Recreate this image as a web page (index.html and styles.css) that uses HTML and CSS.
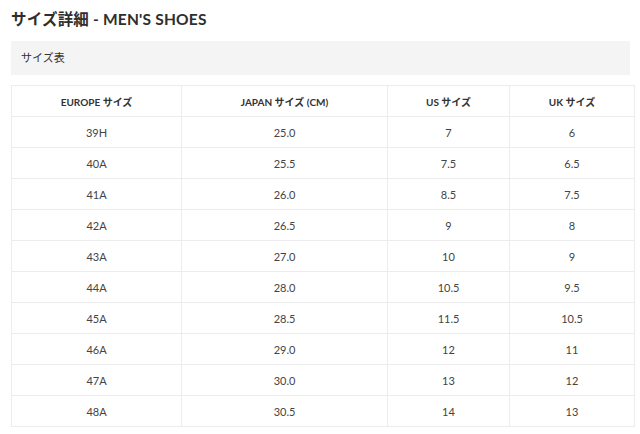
FILE: index.html
```html
<!DOCTYPE html>
<html lang="ja">
<head>
<meta charset="utf-8">
<link rel="stylesheet" href="styles.css">
</head>
<body>
<div class="page">
  <h1 class="title">サイズ詳細 - MEN'S SHOES</h1>
  <div class="tab">サイズ表</div>
  <table class="size">
    <thead>
      <tr><th class="c1">EUROPE サイズ</th><th class="c2">JAPAN サイズ (CM)</th><th class="c3">US サイズ</th><th class="c4">UK サイズ</th></tr>
    </thead>
    <tbody>
      <tr><td>39H</td><td>25.0</td><td>7</td><td>6</td></tr>
      <tr><td>40A</td><td>25.5</td><td>7.5</td><td>6.5</td></tr>
      <tr><td>41A</td><td>26.0</td><td>8.5</td><td>7.5</td></tr>
      <tr><td>42A</td><td>26.5</td><td>9</td><td>8</td></tr>
      <tr><td>43A</td><td>27.0</td><td>10</td><td>9</td></tr>
      <tr><td>44A</td><td>28.0</td><td>10.5</td><td>9.5</td></tr>
      <tr><td>45A</td><td>28.5</td><td>11.5</td><td>10.5</td></tr>
      <tr><td>46A</td><td>29.0</td><td>12</td><td>11</td></tr>
      <tr><td>47A</td><td>30.0</td><td>13</td><td>12</td></tr>
      <tr><td>48A</td><td>30.5</td><td>14</td><td>13</td></tr>
    </tbody>
  </table>
</div>
</body>
</html>
```
FILE: styles.css
```css
html, body {
  margin: 0;
  padding: 0;
  background: #fff;
}
body {
  font-family: Lato, "Noto Sans CJK JP", sans-serif;
  color: #333;
}
.page {
  padding: 8px 10px 0 11px;
}
.title {
  margin: 0;
  font-size: 15.5px;
  line-height: 22px;
  font-weight: 700;
  color: #2e2e2e;
  letter-spacing: 0.2px;
}
.tab {
  margin-top: 11px;
  height: 34px;
  line-height: 34px;
  background: #f4f4f4;
  padding-left: 10px;
  font-size: 11px;
  color: #333;
}
.size {
  margin-top: 10px;
  width: 100%;
  border-collapse: collapse;
  table-layout: fixed;
}
.size th, .size td {
  border: 1px solid #ececec;
  height: 30px;
  padding: 0;
  text-align: center;
  vertical-align: middle;
  font-size: 11px;
}
.size th {
  font-weight: 700;
  font-size: 10px;
  color: #333;
}
.size td {
  color: #444;
}
.c1 { width: 169px; }
.c2 { width: 205px; }
.c3 { width: 121px; }
.c4 { width: 124px; }
```
